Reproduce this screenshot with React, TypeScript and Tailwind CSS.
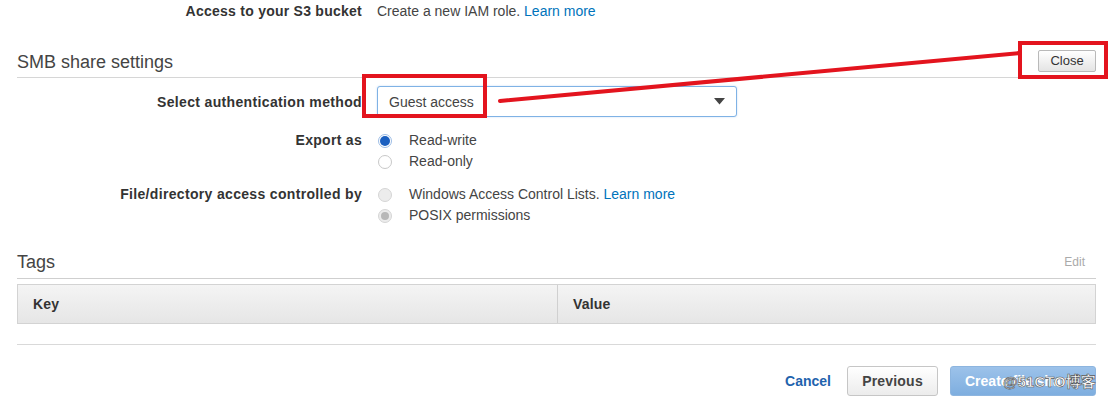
import React from "react";

const Radio: React.FC<{ checked?: boolean; disabled?: boolean }> = ({ checked, disabled }) => {
  if (disabled) {
    return (
      <span className="flex h-[14px] w-[14px] items-center justify-center rounded-full border border-[#d5d5d5] bg-[#ececec]">
        {checked && <span className="h-[8px] w-[8px] rounded-full bg-[#b8b8b8]"></span>}
      </span>
    );
  }
  return (
    <span
      className={`flex h-[14px] w-[14px] items-center justify-center rounded-full border ${
        checked ? "border-[#9dbde6] bg-white" : "border-[#c8c8c8] bg-white"
      }`}
    >
      {checked && <span className="h-[10px] w-[10px] rounded-full bg-[#1a5fc0]"></span>}
    </span>
  );
};

const App: React.FC = () => {
  return (
    <div className="relative h-[401px] w-[1113px] overflow-hidden bg-white font-['Liberation_Sans',Arial,sans-serif] text-[14px] text-[#444]">
      <div className="px-[17px]">
        {/* S3 access row */}
        <div className="flex h-[22px] items-center">
          <div className="w-[345px] text-right font-bold tracking-[0.25px] text-[#333]">Access to your S3 bucket</div>
          <div className="ml-[15px]">
            Create a new IAM role. <span className="text-[#0073bb]">Learn more</span>
          </div>
        </div>

        {/* SMB share settings header */}
        <div className="mt-[29px] flex items-center justify-between border-b border-[#d6d6d6] pb-[4px]">
          <h2 className="text-[18px] leading-[22px] text-[#444]">SMB share settings</h2>
          <button className="-mt-[2px] h-[22px] w-[58px] rounded-[2px] border border-[#b9b9b9] bg-gradient-to-b from-white to-[#e4e4e4] text-[13px] text-[#333]">
            Close
          </button>
        </div>

        {/* Authentication method */}
        <div className="mt-[8px] flex items-center">
          <div className="w-[345px] pt-[2px] text-right font-bold tracking-[0.35px] text-[#333]">Select authentication method</div>
          <div className="ml-[15px] flex h-[31px] w-[360px] items-center justify-between rounded-[3px] border border-[#7fb2e5] bg-white pl-[11px] pr-[11px] text-[#444] shadow-[0_0_2px_rgba(80,150,220,0.35)]">
            <span className="pt-[1px]">Guest access</span>
            <svg width="11" height="7" viewBox="0 0 11 7">
              <path d="M0 0 L11 0 L5.5 6.5 Z" fill="#444" />
            </svg>
          </div>
        </div>

        {/* Export as */}
        <div className="mt-[13px] flex">
          <div className="w-[345px] text-right font-bold leading-[21px] tracking-[0.3px] text-[#333]">Export as</div>
          <div className="ml-[15px] flex flex-col">
            <div className="flex h-[21px] items-center">
              <span className="ml-[1px]"><Radio checked /></span>
              <span className="ml-[17px]">Read-write</span>
            </div>
            <div className="flex h-[21px] items-center">
              <span className="ml-[1px]"><Radio /></span>
              <span className="ml-[17px]">Read-only</span>
            </div>
          </div>
        </div>

        {/* File/directory access */}
        <div className="mt-[12px] flex">
          <div className="w-[345px] text-right font-bold leading-[21px] tracking-[0.33px] text-[#333]">File/directory access controlled by</div>
          <div className="ml-[15px] flex flex-col">
            <div className="flex h-[21px] items-center">
              <span className="ml-[1px]"><Radio disabled /></span>
              <span className="ml-[17px]">
                Windows Access Control Lists. <span className="text-[#0073bb]">Learn more</span>
              </span>
            </div>
            <div className="flex h-[21px] items-center">
              <span className="ml-[1px]"><Radio disabled checked /></span>
              <span className="ml-[17px]">POSIX permissions</span>
            </div>
          </div>
        </div>

        {/* Tags header */}
        <div className="mt-[25px] flex items-center justify-between border-b border-[#cfcfcf] pb-[5px]">
          <h2 className="text-[18px] leading-[22px] text-[#444]">Tags</h2>
          <span className="mr-[11px] text-[12px] text-[#aaa]">Edit</span>
        </div>

        {/* Tags table */}
        <div className="mt-[5px] flex h-[40px] border border-[#d3d3d3] bg-gradient-to-b from-[#f4f4f4] to-[#e6e6e6] font-bold tracking-[0.2px] text-[#333]">
          <div className="flex w-[540px] items-center border-r border-[#d0d0d0] pl-[15px]">Key</div>
          <div className="flex flex-1 items-center pl-[15px]">Value</div>
        </div>

        <div className="mt-[20px] h-px bg-[#d9d9d9]"></div>

        {/* Footer buttons */}
        <div className="mt-[21px] flex items-center justify-end">
          <span className="mr-[16px] font-bold text-[#1f63ad]">Cancel</span>
          <button className="mr-[12px] h-[30px] w-[91px] rounded-[3px] border border-[#c6c6c6] bg-gradient-to-b from-white to-[#ececec] font-bold tracking-[0.2px] text-[#444]">
            Previous
          </button>
          <button className="relative h-[30px] w-[146px] rounded-[3px] border border-[#8db5df] bg-gradient-to-b from-[#9cc2ea] to-[#7eaedf] text-left font-bold text-white">
            <span className="pl-[14px]">Create file share</span>
          </button>
        </div>
      </div>

      {/* watermark */}
      <div className="absolute left-[1003px] top-[371px] text-[15px] font-bold text-white [-webkit-text-stroke:0.6px_#555] font-['Liberation_Sans','Noto_Sans_CJK_SC',sans-serif]">
        @51CTO博客
      </div>

      {/* red annotations */}
      <svg className="pointer-events-none absolute left-0 top-0" width="1113" height="401">
        <rect x="364" y="76" width="121" height="40" fill="none" stroke="#e3141e" strokeWidth="4" />
        <rect x="1020" y="43" width="86" height="34" fill="none" stroke="#e3141e" strokeWidth="4" />
        <line x1="500" y1="101" x2="1020" y2="53" stroke="#e3141e" strokeWidth="4" strokeLinecap="round" />
      </svg>
    </div>
  );
};

export default App;
